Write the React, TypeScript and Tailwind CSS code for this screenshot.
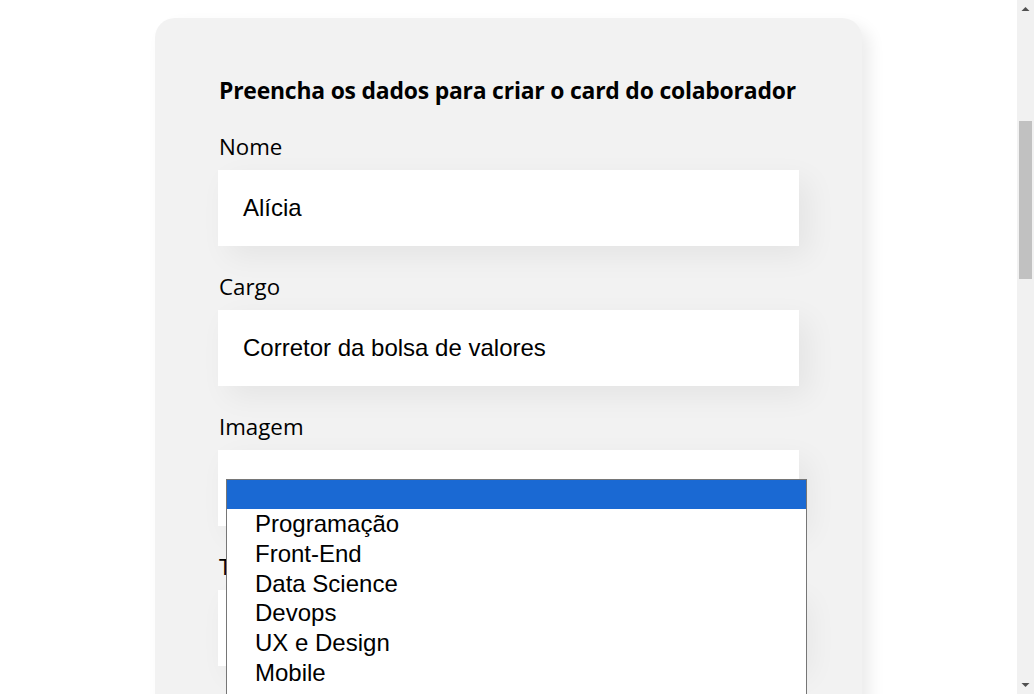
import React from "react";

const fields = [
  { label: "Nome", value: "Alícia" },
  { label: "Cargo", value: "Corretor da bolsa de valores" },
  { label: "Imagem", value: "" },
  { label: "Time", value: "" },
];

const options = ["Programação", "Front-End", "Data Science", "Devops", "UX e Design", "Mobile"];

export default function App() {
  return (
    <div className="flex h-[694px] w-[1034px] overflow-hidden bg-white">
      <main className="relative flex-1 overflow-hidden">
        <div className="mx-auto mt-[18px] w-[707px] rounded-[20px] bg-[#f2f2f2] pb-10 pl-[64px] pr-[63px] pt-[57px] shadow-[8px_8px_16px_rgba(0,0,0,0.08)]">
          <h2 className="whitespace-nowrap font-['Open_Sans',sans-serif] text-[22.9px] font-bold leading-[32px] tracking-[-0.2px] text-black">
            Preencha os dados para criar o card do colaborador
          </h2>
          <div className="mt-[24px] flex flex-col">
            {fields.map((f) => (
              <div key={f.label} className="mb-[25px] flex flex-col">
                <label className="font-['Open_Sans',sans-serif] text-[22.3px] leading-[32px] text-black">{f.label}</label>
                <div className="-ml-px mt-[7px] flex h-[76px] w-[581px] items-center bg-white pl-[25px] font-['Liberation_Sans',Arial,sans-serif] text-[24px] text-black shadow-[10px_10px_30px_rgba(0,0,0,0.06)]">
                  {f.value}
                </div>
              </div>
            ))}
          </div>
        </div>
        <div className="absolute left-[226px] top-[479px] h-[260px] w-[581px] border border-[#767676] bg-white font-['Liberation_Sans',Arial,sans-serif] text-[24px] text-black">
          <div className="h-[29px] bg-[#1a69d3]" />
          {options.map((o) => (
            <div key={o} className="h-[29.8px] pl-[28px] leading-[29.8px]">
              {o}
            </div>
          ))}
        </div>
      </main>
      <div className="flex w-[17px] flex-col items-center bg-[#f1f1f1]">
        <svg width="17" height="17" viewBox="0 0 17 17" className="shrink-0">
          <path d="M4.5 11 L8.5 7 L12.5 11 Z" fill="#505050" />
        </svg>
        <div className="mt-[104px] h-[158px] w-[13px] bg-[#c1c1c1]" />
        <div className="flex-1" />
        <svg width="17" height="17" viewBox="0 0 17 17" className="shrink-0">
          <path d="M4.5 6 L8.5 10 L12.5 6 Z" fill="#505050" />
        </svg>
      </div>
    </div>
  );
}
